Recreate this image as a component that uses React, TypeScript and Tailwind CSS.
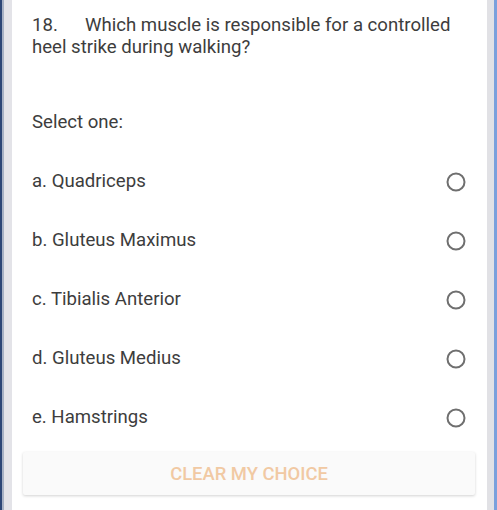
const options = [
  'a. Quadriceps',
  'b. Gluteus Maximus',
  'c. Tibialis Anterior',
  'd. Gluteus Medius',
  'e. Hamstrings',
]

function Radio() {
  return (
    <svg width="22" height="22" viewBox="0 0 22 22" className="shrink-0">
      <circle cx="11" cy="11" r="8.5" fill="white" stroke="#6f6f6f" strokeWidth="2" />
    </svg>
  )
}

export default function App() {
  return (
    <div
      className="flex h-[510px] w-[497px] overflow-hidden bg-white text-[#3d3d3d]"
      style={{ fontFamily: 'Roboto, "Noto Sans", sans-serif' }}
    >
      {/* left frame */}
      <div className="w-[2px] bg-[#2c4676]" />
      <div className="w-[2px] bg-[#a7b1c4]" />
      <div className="w-[8px] bg-[#e3e3e8]" />

      {/* card */}
      <div className="flex flex-1 flex-col bg-white">
        <p className="px-[20px] pt-[14px] text-[18.6px] leading-[22px]">
          {'18.\u2003\u2004\u200AWhich muscle is responsible for a controlled heel strike during walking?'}
        </p>

        <div className="mt-[35px] flex h-[59px] items-center px-[20px] text-[18.6px]">Select one:</div>

        {options.map((opt) => (
          <div key={opt} className="flex h-[59px] items-center justify-between px-[20px]">
            <span className="text-[18.6px]">{opt}</span>
            <Radio />
          </div>
        ))}

        <div className="ml-[11px] mr-[12px] mt-[5px] flex h-[43px] items-center justify-center rounded-[2px] bg-[#fafafa] shadow-[0_1px_3px_rgba(0,0,0,0.18)]">
          <span className="text-[18.4px] font-medium text-[#f1c9a3]">CLEAR MY CHOICE</span>
        </div>
      </div>

      {/* right frame */}
      <div className="w-[7px] bg-[#e1e1e5]" />
      <div className="w-[3px] bg-[#7aa0dc]" />
    </div>
  )
}
